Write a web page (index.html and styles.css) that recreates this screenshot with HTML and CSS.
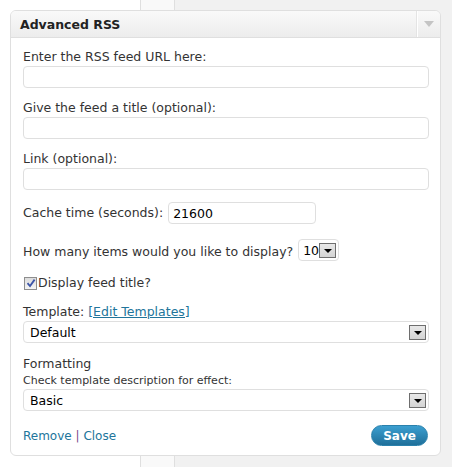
FILE: index.html
```html
<!DOCTYPE html>
<html>
<head>
<meta charset="utf-8">
<link rel="stylesheet" href="styles.css">
</head>
<body>
<div class="widget">
  <div class="widget-top">
    <h4 class="widget-title">Advanced RSS</h4>
    <div class="widget-toggle"><span class="toggle-arrow"></span></div>
  </div>
  <div class="widget-inside">
    <div class="field">
      <label class="lbl">Enter the RSS feed URL here:</label>
      <div class="input wide"></div>
    </div>
    <div class="field">
      <label class="lbl">Give the feed a title (optional):</label>
      <div class="input wide"></div>
    </div>
    <div class="field">
      <label class="lbl">Link (optional):</label>
      <div class="input wide"></div>
    </div>
    <div class="row cache-row">
      <span class="lbl">Cache time (seconds):</span>
      <div class="input cache"><span class="val">21600</span></div>
    </div>
    <div class="row items-row">
      <span class="lbl">How many items would you like to display?</span>
      <div class="input select small"><span class="val">10</span><span class="ddbtn"><span class="ddarrow"></span></span></div>
    </div>
    <div class="row check-row">
      <span class="checkbox"><svg width="10" height="10" viewBox="0 0 10 10"><path d="M1.5 5.2 L4 8 L8.6 1.6" fill="none" stroke="#3c55a8" stroke-width="1.8"/></svg></span>
      <span class="lbl">Display feed title?</span>
    </div>
    <div class="field template">
      <span class="lbl">Template: <a class="link" href="#">[Edit Templates]</a></span>
      <div class="input select wide"><span class="val">Default</span><span class="ddbtn"><span class="ddarrow"></span></span></div>
    </div>
    <div class="field formatting">
      <span class="lbl">Formatting</span>
      <span class="note">Check template description for effect:</span>
      <div class="input select wide"><span class="val">Basic</span><span class="ddbtn"><span class="ddarrow"></span></span></div>
    </div>
    <div class="widget-control">
      <div class="links"><a class="ctl" href="#">Remove</a> <span class="sep">|</span> <a class="ctl" href="#">Close</a></div>
      <span class="save">Save</span>
    </div>
  </div>
</div>
</body>
</html>
```

FILE: styles.css
```css
html, body {
  margin: 0;
  padding: 0;
}
body {
  width: 452px;
  height: 467px;
  overflow: hidden;
  font-family: "DejaVu Sans", Verdana, sans-serif;
  color: #333;
  background: linear-gradient(to right, #fff 0, #fff 140px, #dfdfdf 140px, #dfdfdf 141px, #f9f9f9 141px, #f9f9f9 174px, #dfdfdf 174px, #dfdfdf 175px, #f1f1f1 175px);
  padding-top: 10px;
  box-sizing: border-box;
}
.widget {
  margin-left: 10px;
  width: 431px;
  height: 446px;
  box-sizing: border-box;
  border: 1px solid #dfdfdf;
  border-radius: 6px;
  background: #fff;
  display: flex;
  flex-direction: column;
  overflow: hidden;
}
.widget-top {
  height: 26px;
  border-bottom: 1px solid #dfdfdf;
  background: linear-gradient(to bottom, #f9f9f9, #ececec);
  display: flex;
  align-items: center;
}
.widget-title {
  margin: 0;
  flex: 1;
  padding-left: 9px;
  font-family: "DejaVu Sans", Verdana, sans-serif;
  font-size: 12.5px;
  font-weight: bold;
  color: #222;
}
.widget-toggle {
  width: 22px;
  align-self: stretch;
  border-left: 1px solid #fff;
  box-shadow: -1px 0 0 #e4e4e4;
  display: flex;
  align-items: center;
  justify-content: center;
}
.toggle-arrow {
  width: 0;
  height: 0;
  border-left: 5px solid transparent;
  border-right: 5px solid transparent;
  border-top: 6px solid #c4c4c4;
}
.widget-inside {
  flex: 1;
  padding: 11px 12px 0 12px;
  display: flex;
  flex-direction: column;
}
.lbl {
  font-size: 12.5px;
  line-height: 16px;
  color: #333;
  white-space: nowrap;
}
.field {
  display: flex;
  flex-direction: column;
  gap: 1px;
  margin-bottom: 12px;
}
.input {
  height: 22px;
  box-sizing: border-box;
  border: 1px solid #dfdfdf;
  border-radius: 4px;
  background: #fff;
  display: flex;
  align-items: center;
  font-size: 12.5px;
  color: #000;
}
.input.wide {
  width: 406px;
}
.row {
  display: flex;
  align-items: center;
  margin-bottom: 15px;
}
.cache-row .lbl {
  margin-right: 5px;
}
.input.cache {
  width: 148px;
  height: 22px;
  padding-left: 4px;
}
.items-row {
  margin-bottom: 14px;
}
.items-row .lbl {
  margin-right: 5px;
  padding-top: 3px;
}
.input.select {
  justify-content: space-between;
  padding: 0 2px 0 6px;
}
.input.small {
  width: 41px;
  padding-left: 4px;
  padding-right: 2px;
}
.input.select .val {
  font-size: 12.5px;
  color: #000;
}
.ddbtn {
  width: 17px;
  height: 15px;
  box-sizing: border-box;
  border: 1px solid #6e6e6e;
  background: linear-gradient(to bottom, #e8e8e8, #d4d4d4);
  display: flex;
  align-items: center;
  justify-content: center;
}
.ddarrow {
  width: 0;
  height: 0;
  margin-top: 2px;
  border-left: 4px solid transparent;
  border-right: 4px solid transparent;
  border-top: 4px solid #000;
}
.check-row {
  margin-bottom: 13px;
}
.checkbox {
  width: 11px;
  height: 11px;
  border: 1px solid #8e8e8e;
  background: linear-gradient(to bottom, #dcdcdc, #f4f4f4);
  display: flex;
  align-items: center;
  justify-content: center;
  margin: 0 1px 0 1px;
}
.link {
  color: #21759b;
  text-decoration: underline;
}
.template {
  margin-bottom: 12px;
}
.template .input {
  margin-top: 0;
}
.formatting {
  gap: 0;
}
.formatting .lbl {
  font-size: 12.5px;
  line-height: 17px;
}
.note {
  font-size: 11px;
  line-height: 14px;
  margin-top: 2px;
  margin-bottom: 1px;
  color: #333;
}
.widget-control {
  display: flex;
  align-items: center;
  justify-content: space-between;
  margin-top: 2px;
  padding-right: 0;
}
.links {
  font-size: 12px;
  color: #333;
}
.ctl {
  color: #21759b;
  text-decoration: none;
}
.sep {
  color: #7d4a8c;
}
.save {
  width: 57px;
  height: 21px;
  border-radius: 11px;
  background: linear-gradient(to bottom, #3b9fd0, #1f6f9a);
  border: 1px solid #2a81ac;
  box-sizing: border-box;
  color: #fff;
  font-weight: bold;
  font-size: 12px;
  display: flex;
  align-items: center;
  justify-content: center;
}
```
